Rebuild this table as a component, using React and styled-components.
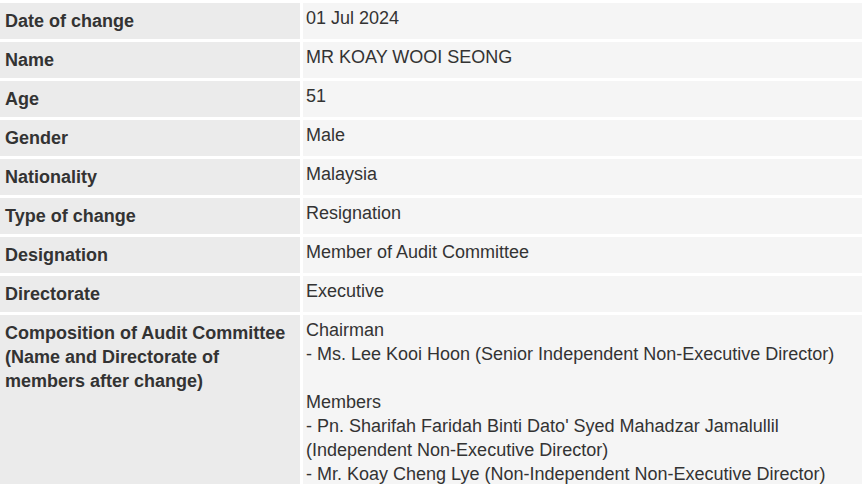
import React from "react";
import styled, { createGlobalStyle } from "styled-components";

const Global = createGlobalStyle`
  html, body { margin: 0; padding: 0; background: #ffffff; }
  body { font-family: "Liberation Sans", Arial, sans-serif; color: #333333; }
`;

const Table = styled.div`
  display: grid;
  grid-template-columns: 300px 1fr;
  grid-auto-rows: minmax(36px, auto);
  gap: 3px;
  padding: 3px 3px 0 0;
`;

const Label = styled.div`
  background: #ebebeb;
  font-weight: bold;
  font-size: 18px;
  line-height: 24px;
  padding: 6px 5px 6px 5px;
  color: #333333;
`;

const Value = styled.div`
  background: #f5f5f5;
  font-size: 18px;
  line-height: 24px;
  padding: 3px 3px 6px 3px;
  color: #333333;
`;

const rows = [
  ["Date of change", "01 Jul 2024"],
  ["Name", "MR KOAY WOOI SEONG"],
  ["Age", "51"],
  ["Gender", "Male"],
  ["Nationality", "Malaysia"],
  ["Type of change", "Resignation"],
  ["Designation", "Member of Audit Committee"],
  ["Directorate", "Executive"],
];

export default function App() {
  return (
    <>
      <Global />
      <Table>
        {rows.map(([l, v]) => (
          <React.Fragment key={l}>
            <Label>{l}</Label>
            <Value>{v}</Value>
          </React.Fragment>
        ))}
        <Label>
          Composition of Audit Committee (Name and Directorate of members after
          change)
        </Label>
        <Value>
          Chairman
          <br />- Ms. Lee Kooi Hoon (Senior Independent Non-Executive Director)
          <br />
          <br />
          Members
          <br />- Pn. Sharifah Faridah Binti Dato' Syed Mahadzar Jamalullil
          (Independent Non-Executive Director)
          <br />- Mr. Koay Cheng Lye (Non-Independent Non-Executive Director)
        </Value>
      </Table>
    </>
  );
}
